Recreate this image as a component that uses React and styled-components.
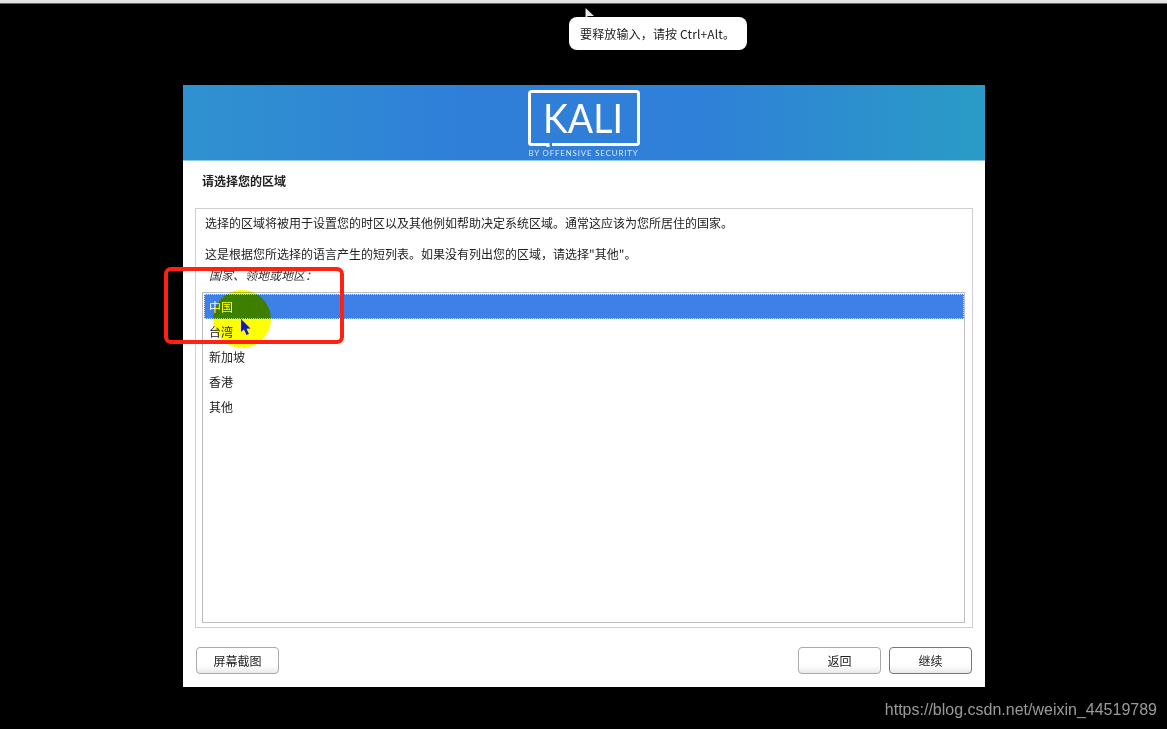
import React from "react";
import styled, { createGlobalStyle } from "styled-components";

const GlobalStyle = createGlobalStyle`
  html, body {
    margin: 0;
    padding: 0;
    height: 100%;
    background: #000;
  }
  body {
    font-family: "Liberation Sans", "Noto Sans CJK SC", sans-serif;
  }
`;

const Page = styled.div`
  position: relative;
  width: 1167px;
  height: 729px;
  overflow: hidden;
  background: #000;
`;

const TopLine = styled.div`
  height: 4px;
  background: #e4e4e4;
  border-bottom: 1px solid #666;
  box-sizing: border-box;
`;

const Tip = styled.div`
  position: absolute;
  left: 569px;
  top: 17px;
  width: 178px;
  height: 33px;
  border-radius: 8px;
  background: #fff;
  color: #222;
  font-size: 12px;
  letter-spacing: 0.15px;
  line-height: 33px;
  padding-left: 11px;
  box-sizing: border-box;
  white-space: nowrap;
  font-family: "Noto Sans CJK SC", sans-serif;
`;

const Window = styled.div`
  width: 802px;
  height: 602px;
  margin: 81px 0 0 183px;
  background: #fff;
  display: flex;
  flex-direction: column;
  font-family: "Noto Sans CJK SC", sans-serif;
  font-size: 12px;
  color: #222;
`;

const Banner = styled.header`
  height: 76px;
  flex: none;
  box-sizing: border-box;
  border-bottom: 1px solid #8fcbe4;
  background: linear-gradient(90deg, #2f92cf 0%, #2f7fd9 35%, #2f80d8 65%, #2a9cc6 100%);
  display: flex;
  justify-content: center;
  padding-top: 3px;
`;

const Title = styled.h1`
  margin: 0;
  padding: 11px 0 0 19px;
  height: 47px;
  box-sizing: border-box;
  font-size: 12px;
  line-height: 18px;
  font-weight: 700;
  color: #222;
`;

const Frame = styled.section`
  margin: 0 12px;
  height: 420px;
  flex: none;
  box-sizing: border-box;
  border: 1px solid #cfcfcf;
  padding: 0 7px 4px 6px;
  display: flex;
  flex-direction: column;
`;

const Para = styled.p`
  margin: 0;
  padding-left: 3px;
  line-height: 18px;
  height: ${(p) => p.$h}px;
  white-space: nowrap;
  padding-top: ${(p) => p.$top}px;
`;

const Label = styled.div`
  font-style: italic;
  line-height: 18px;
  height: 18px;
  margin: 3px 0 8px;
  padding-left: 7px;
  color: #333;
`;

const List = styled.ul`
  list-style: none;
  margin: 0;
  padding: 1px 0 1px 1px;
  flex: 1;
  border: 1px solid #bdbdbd;
`;

const Row = styled.li`
  height: 25px;
  line-height: 25px;
  padding-left: 5px;
  box-sizing: border-box;
  color: ${(p) => (p.$selected ? "#fff" : "#222")};
  background: ${(p) => (p.$selected ? "#3f7fe8" : "transparent")};
  outline: ${(p) => (p.$selected ? "1px dotted #cfe0f8" : "none")};
  outline-offset: -1px;
`;

const Footer = styled.footer`
  flex: 1;
  display: flex;
  justify-content: space-between;
  padding: 19px 13px 0;
`;

const Group = styled.div`
  display: flex;
  gap: 8px;
`;

const Button = styled.button`
  width: 83px;
  height: 27px;
  padding: 0;
  border: 1px solid ${(p) => (p.$primary ? "#777" : "#aaa")};
  border-radius: 4px;
  background: linear-gradient(#fff 70%, #e9e9e9);
  color: #222;
  font: inherit;
`;

const Highlight = styled.div`
  position: absolute;
  left: 213px;
  top: 290px;
  width: 58px;
  height: 58px;
  border-radius: 50%;
  background: #ffff00;
  mix-blend-mode: multiply;
`;

const Callout = styled.div`
  position: absolute;
  left: 164px;
  top: 267px;
  width: 180px;
  height: 77px;
  box-sizing: border-box;
  border: 4px solid #ff2213;
  border-radius: 7px;
`;

const Pointer = styled.svg`
  position: absolute;
  left: ${(p) => p.$x}px;
  top: ${(p) => p.$y}px;
`;

const Watermark = styled.div`
  position: absolute;
  right: 10px;
  top: 700px;
  font-size: 16px;
  line-height: 20px;
  color: #9a9a9a;
`;

const KaliLogo = () => (
  <svg width="114" height="70" viewBox="0 0 114 70">
    <path
      d="M25 56.5 H109.5 a2 2 0 0 0 2 -2 V5.5 a2 2 0 0 0 -2 -2 H4.5 a2 2 0 0 0 -2 2 V54.5 a2 2 0 0 0 2 2 H21 V59"
      fill="none"
      stroke="#fff"
      strokeWidth="3"
    />
    <text
      x="16"
      y="45"
      textLength="80"
      lengthAdjust="spacingAndGlyphs"
      fill="#fff"
      fontFamily="Lato, sans-serif"
      fontSize="40"
    >
      KALI
    </text>
    <text
      x="1.5"
      y="68"
      textLength="110"
      lengthAdjust="spacingAndGlyphs"
      fill="#d8e8f8"
      fontFamily="Lato, sans-serif"
      fontSize="8"
      letterSpacing="0.9"
    >
      BY OFFENSIVE SECURITY
    </text>
  </svg>
);

const rows = ["中国", "台湾", "新加坡", "香港", "其他"];

export default function App() {
  return (
    <Page>
      <GlobalStyle />
      <TopLine />
      <Window>
        <Banner>
          <KaliLogo />
        </Banner>
        <Title>请选择您的区域</Title>
        <Frame>
          <Para $h={31} $top={5}>
            选择的区域将被用于设置您的时区以及其他例如帮助决定系统区域。通常这应该为您所居住的国家。
          </Para>
          <Para $h={18} $top={0}>
            这是根据您所选择的语言产生的短列表。如果没有列出您的区域，请选择"其他"。
          </Para>
          <Label>国家、领地或地区：</Label>
          <List>
            {rows.map((r, i) => (
              <Row key={r} $selected={i === 0}>
                {r}
              </Row>
            ))}
          </List>
        </Frame>
        <Footer>
          <Button>屏幕截图</Button>
          <Group>
            <Button>返回</Button>
            <Button $primary>继续</Button>
          </Group>
        </Footer>
      </Window>
      <Tip>要释放输入，请按 Ctrl+Alt。</Tip>
      <Pointer $x={585} $y={8} width="10" height="12" viewBox="0 0 10 12">
        <path d="M0.5 0 L0.5 10 L3 8 L9 8 Z" fill="#e8e8e8" />
      </Pointer>
      <Highlight />
      <Callout />
      <Pointer $x={240} $y={319} width="12" height="17" viewBox="0 0 12 17">
        <path d="M1 0 V13 L4 10.5 L6.5 16 L9 15 L6.5 9.8 L10.5 9.5 Z" fill="#1616c8" />
      </Pointer>
      <Watermark>https://blog.csdn.net/weixin_44519789</Watermark>
    </Page>
  );
}
